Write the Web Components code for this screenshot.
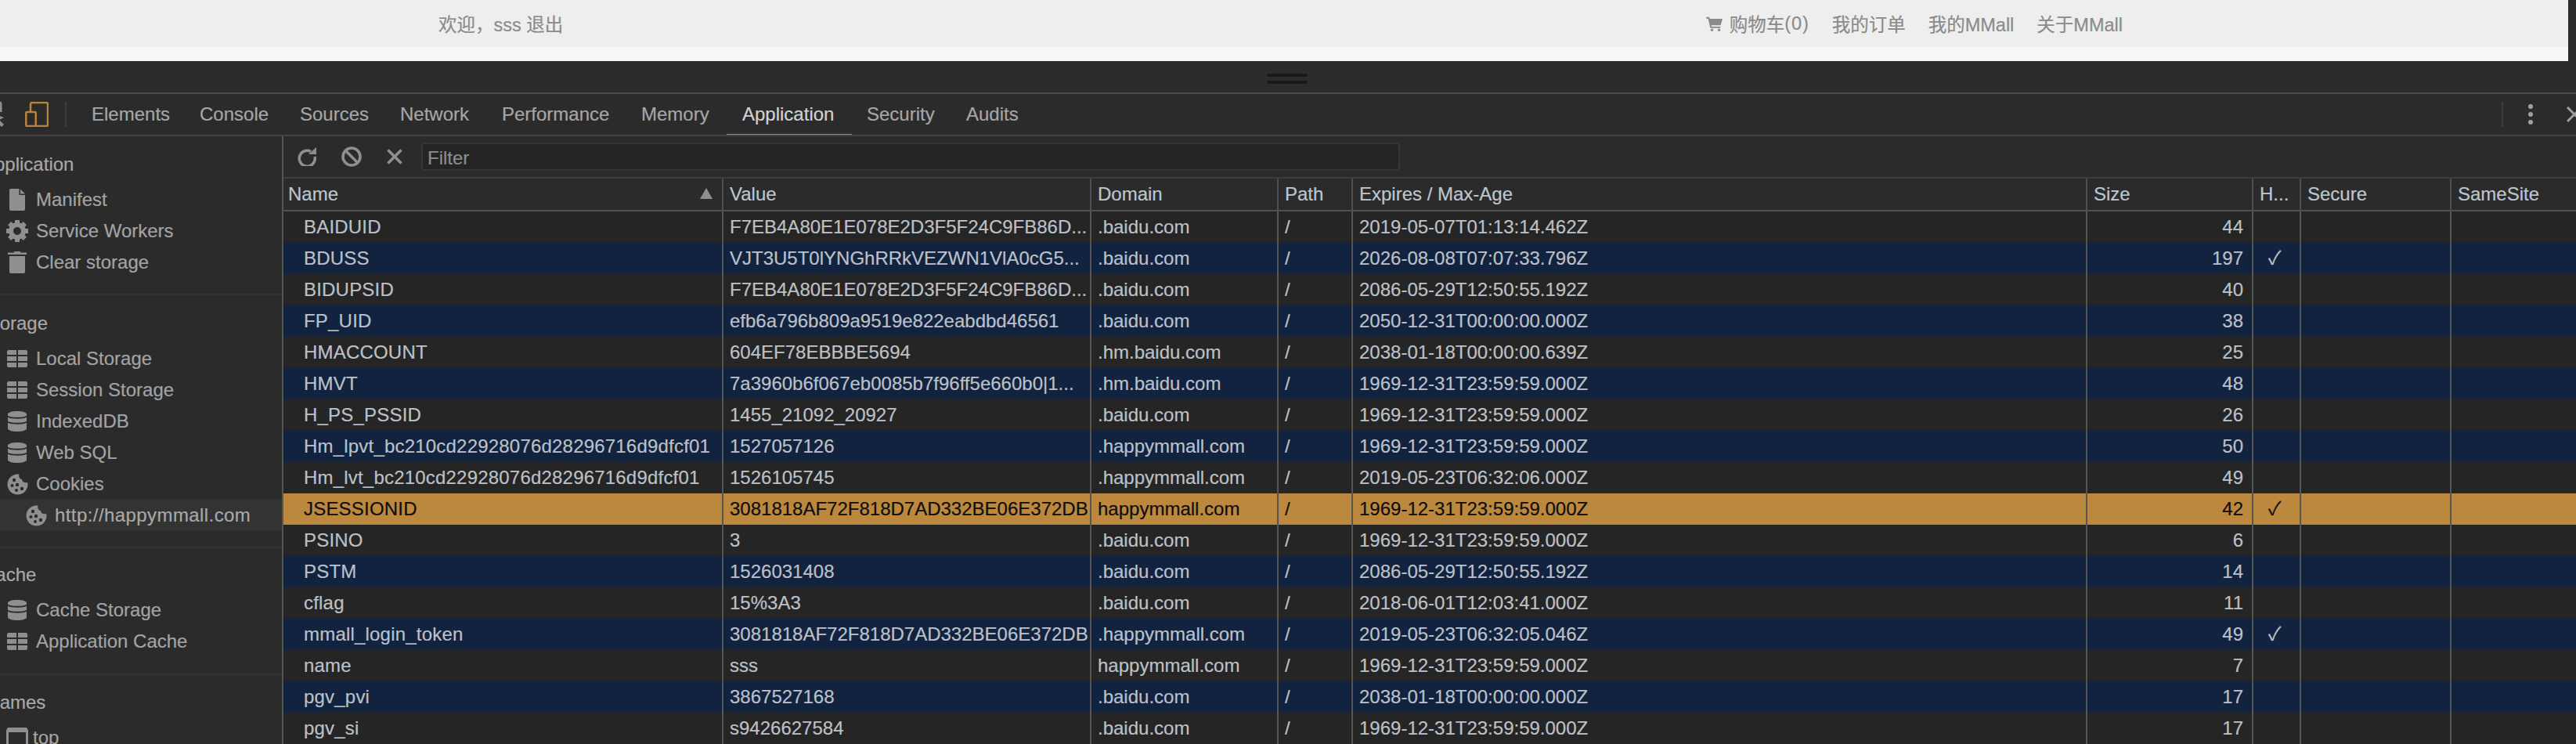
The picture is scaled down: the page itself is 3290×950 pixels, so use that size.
<!DOCTYPE html>
<html lang="zh">
<head>
<meta charset="utf-8">
<title>DevTools Application</title>
<style>
html,body{margin:0;padding:0;background:#2b2b2b;overflow:hidden}
body{width:3290px;height:950px;font-family:"Liberation Sans","Noto Sans CJK SC",sans-serif;font-size:24px;-webkit-text-stroke:.2px}
</style>
</head>
<body>
<dt-app>
  <mm-nav></mm-nav>
  <dt-resizer></dt-resizer>
  <dt-tabbar>
    <dt-tab w="138">Elements</dt-tab>
    <dt-tab w="128">Console</dt-tab>
    <dt-tab w="128">Sources</dt-tab>
    <dt-tab w="130">Network</dt-tab>
    <dt-tab w="178">Performance</dt-tab>
    <dt-tab w="129">Memory</dt-tab>
    <dt-tab w="159" active>Application</dt-tab>
    <dt-tab w="127">Security</dt-tab>
    <dt-tab w="107">Audits</dt-tab>
  </dt-tabbar>
  <dt-main>
    <dt-sidebar>
      <dt-section title-text="Application" pad-top="16" pad-bottom="20" first>
        <dt-item icon="file">Manifest</dt-item>
        <dt-item icon="gear">Service Workers</dt-item>
        <dt-item icon="trash">Clear storage</dt-item>
      </dt-section>
      <dt-section title-text="Storage" pad-top="16" pad-bottom="20">
        <dt-item icon="grid">Local Storage</dt-item>
        <dt-item icon="grid">Session Storage</dt-item>
        <dt-item icon="db">IndexedDB</dt-item>
        <dt-item icon="db">Web SQL</dt-item>
        <dt-item icon="cookie">Cookies</dt-item>
        <dt-item icon="cookie" child selected>http://happymmall.com</dt-item>
      </dt-section>
      <dt-section title-text="Cache" pad-top="14" pad-bottom="21">
        <dt-item icon="db">Cache Storage</dt-item>
        <dt-item icon="grid">Application Cache</dt-item>
      </dt-section>
      <dt-section title-text="Frames" pad-top="15" pad-bottom="0">
        <dt-item icon="frame" tight>top</dt-item>
      </dt-section>
    </dt-sidebar>
    <dt-panel>
      <dt-filterbar></dt-filterbar>
      <dt-cookie-table></dt-cookie-table>
    </dt-panel>
  </dt-main>
</dt-app>
<script>
const ICONS = {
  file:'<svg width="20" height="28" viewBox="0 0 20 28"><path fill="#8f8f8f" d="M2 0H12.5V8H20V26a2 2 0 0 1-2 2H2a2 2 0 0 1-2-2V2a2 2 0 0 1 2-2zM14 0.5L20 6.5H14z"/></svg>',
  gear:'<svg width="28" height="28" viewBox="0 0 28 28"><g fill="#8f8f8f">'+[0,45,90,135,180,225,270,315].map(a=>`<rect x="11" y="0" width="6" height="6" transform="rotate(${a} 14 14)"/>`).join('')+'</g><circle cx="14" cy="14" r="8" fill="none" stroke="#8f8f8f" stroke-width="6"/></svg>',
  trash:'<svg width="24" height="28" viewBox="0 0 24 28"><path fill="#8f8f8f" d="M8 0h8v1.500h8V4H0V1.500h8zM2 6H22V26a2 2 0 0 1-2 2H4a2 2 0 0 1-2-2z"/></svg>',
  grid:'<svg width="26" height="22" viewBox="0 0 26 22"><g fill="#8f8f8f"><path d="M2 0h10v6H0V2a2 2 0 0 1 2-2z"/><path d="M14 0h10a2 2 0 0 1 2 2v4H14z"/><rect x="0" y="8" width="12" height="6"/><rect x="14" y="8" width="12" height="6"/><path d="M0 16h12v6H2a2 2 0 0 1-2-2z"/><path d="M14 16h12v4a2 2 0 0 1-2 2H14z"/></g></svg>',
  db:'<svg width="24" height="26" viewBox="0 0 24 26"><path fill="#8f8f8f" d="M0 4C0 1.500 5.500 0 12 0s12 1.500 12 4V22c0 2.500-5.500 4-12 4S0 24.500 0 22z"/><path fill="none" stroke="#2b2b2b" stroke-width="2" d="M0 6.500C2 9.500 22 9.500 24 6.500M0 13.500C2 16.500 22 16.500 24 13.500"/></svg>',
  cookie:'<svg width="27" height="27" viewBox="0 0 27 27"><path fill="#8f8f8f" fill-rule="evenodd" d="M13.500 0.500C14.500 0.500 15 0.600 15.500 1C14.500 4 16.500 7 19 7C19 10 22 12 26 11C26.300 12 26.500 12.800 26.500 13.500A13 13 0 1 1 13.500 0.500z"/><g fill="#2b2b2b"><circle cx="9" cy="8" r="2.200"/><circle cx="6.500" cy="15" r="2"/><circle cx="13" cy="14" r="2.200"/><circle cx="12" cy="21" r="2"/><circle cx="19" cy="19" r="2.200"/></g></svg>',
  frame:'<svg width="28" height="28" viewBox="0 0 28 28"><rect x="1.500" y="2.500" width="25" height="24" rx="3" fill="none" stroke="#8f8f8f" stroke-width="3"/><rect x="1" y="1" width="26" height="6" rx="2" fill="#8f8f8f"/></svg>'
};

function shadow(el, html){
  const r = el.attachShadow({mode:'open'});
  r.innerHTML = html;
  return r;
}

class DtApp extends HTMLElement{
  constructor(){super();shadow(this,`<style>:host{display:flex;flex-direction:column;width:3290px;height:950px;overflow:hidden;background:#2b2b2b}</style><slot></slot>`);}
}
class MmNav extends HTMLElement{
  constructor(){super();shadow(this,`<style>
    :host{display:block;width:3280px;height:78px;background:#f6f6f6;flex:none;color:#8b8b8b;font-family:"Liberation Sans","Noto Sans CJK SC",sans-serif;font-size:23.5px}
    .bar{height:60px;background:#eeeeee;display:flex;align-items:center;justify-content:space-between;padding:0 569px 0 560px;box-sizing:border-box}
    .links{display:flex;gap:29px;align-items:center}
    .link{display:flex;align-items:center;white-space:nowrap}
    svg{margin-right:9px}
    .w{white-space:nowrap}
    .z{letter-spacing:.9px}
  </style>
  <div class="bar">
    <div class="w">欢迎，sss 退出</div>
    <div class="links">
      <div class="link"><svg width="21" height="19" viewBox="0 0 24 22"><path fill="#8b8b8b" d="M0 1h4.500l.8 2.500H24l-2.500 9.500H7.500l.4 2H21v2.200H6L2.800 3.200H0z"/><circle cx="8.500" cy="20" r="2" fill="#8b8b8b"/><circle cx="19" cy="20" r="2" fill="#8b8b8b"/></svg>购物车<span class="z">(0)</span></div>
      <div class="link">我的订单</div>
      <div class="link">我的MMall</div>
      <div class="link">关于MMall</div>
    </div>
  </div>`);}
}
class DtResizer extends HTMLElement{
  constructor(){super();shadow(this,`<style>
    :host{display:flex;flex:none;height:40px;border-bottom:2px solid #4a4a4a;justify-content:center;box-sizing:content-box;background:#2b2b2b}
    .h{width:52px;display:flex;flex-direction:column;gap:5px;margin:16px 0 0 -3px}
    .h i{display:block;height:4px;border-radius:2px;background:#191919}
  </style><div class="h"><i></i><i></i></div>`);}
}
class DtTabbar extends HTMLElement{
  constructor(){super();shadow(this,`<style>
    :host{display:flex;flex:none;height:52px;border-bottom:2px solid #434343;align-items:stretch;background:#2b2b2b;overflow:hidden;position:relative}
    .start{display:flex;align-items:center;width:97px;flex:none;position:relative}
    .ins{margin-left:-26px;flex:none}
    .dev{margin-left:26px;flex:none}
    .sep{width:2px;height:32px;background:#3d3d3d;margin-left:21px;flex:none}
    .tabs{display:flex;flex:1}
    .end{display:flex;align-items:center;flex:none;width:95px}
    .end .sep{margin:0 31px 0 0}
    .end svg{flex:none}
    .x{margin-left:42px}
  </style>
  <div class="start">
    <svg class="ins" width="32" height="34" viewBox="0 0 32 34"><path fill="none" stroke="#8f8f8f" stroke-width="3" d="M3 18V4a2 2 0 0 1 2-2H25a2 2 0 0 1 2 2V14"/><path fill="#8f8f8f" d="M15 15L31 21L25 24L31 30L28 33L22 27L19 33z"/></svg>
    <svg class="dev" width="30" height="32" viewBox="0 0 30 32"><path fill="none" stroke="#b8863b" stroke-width="2.500" d="M7 12V3a2 2 0 0 1 2-2H27a2 2 0 0 1 2 2V29a2 2 0 0 1-2 2H14"/><rect x="1.250" y="13" width="12.500" height="18" rx="1.500" fill="none" stroke="#b8863b" stroke-width="2.500"/></svg>
    <div class="sep"></div>
  </div>
  <div class="tabs"><slot></slot></div>
  <div class="end">
    <div class="sep"></div>
    <svg width="8" height="26" viewBox="0 0 8 26"><g fill="#a0a0a0"><circle cx="4" cy="3" r="3"/><circle cx="4" cy="13" r="3"/><circle cx="4" cy="23" r="3"/></g></svg>
    <svg class="x" width="20" height="20" viewBox="0 0 20 20"><path fill="none" stroke="#a0a0a0" stroke-width="3" d="M1 1L19 19M19 1L1 19"/></svg>
  </div>`);}
}
class DtTab extends HTMLElement{
  constructor(){super();const w=this.getAttribute('w');const a=this.hasAttribute('active');
    shadow(this,`<style>
    :host{display:flex;flex:none;width:${w}px;box-sizing:border-box;padding-left:20px;align-items:center;color:${a?'#d2d2d2':'#a6a6a6'};white-space:nowrap;position:relative;font-size:24px}
    .u{position:absolute;left:0;width:160px;bottom:-2px;height:3px;background:#b8863b}
    </style><slot></slot>${a?'<div class="u"></div>':''}`);}
}
class DtMain extends HTMLElement{
  constructor(){super();shadow(this,`<style>:host{display:flex;flex:1;min-height:0;overflow:hidden}</style><slot></slot>`);}
}
class DtSidebar extends HTMLElement{
  constructor(){super();shadow(this,`<style>:host{display:block;flex:none;width:360px;box-sizing:content-box;border-right:2px solid #555;background:#2b2b2b;overflow:hidden}</style><slot></slot>`);}
}
class DtSection extends HTMLElement{
  constructor(){super();const t=this.getAttribute('title-text'),pt=this.getAttribute('pad-top'),pb=this.getAttribute('pad-bottom'),f=this.hasAttribute('first');
    shadow(this,`<style>
    :host{display:block;padding:${pt}px 0 ${pb}px;${f?'':'border-top:2px solid #333;'}}
    .h{height:40px;line-height:40px;margin:0 0 5px -23px;color:#a8a8a8;white-space:nowrap;font-size:24px}
    </style><div class="h">${t}</div><slot></slot>`);}
}
class DtItem extends HTMLElement{
  constructor(){super();const ic=this.getAttribute('icon'),child=this.hasAttribute('child'),sel=this.hasAttribute('selected'),tight=this.hasAttribute('tight');
    shadow(this,`<style>
    :host{display:flex;height:40px;align-items:center;box-sizing:border-box;padding-left:${child?32:8}px;color:${sel?'#a8a8a8':'#a3a3a3'};white-space:nowrap;background:${sel?'#333333':'transparent'};font-size:24px;${child?'letter-spacing:.42px;':''}}
    .i{width:28px;height:40px;flex:none;display:flex;align-items:center;justify-content:center;margin-right:${tight?6:10}px}
    </style><span class="i">${ICONS[ic]}</span><slot></slot>`);}
}
class DtPanel extends HTMLElement{
  constructor(){super();shadow(this,`<style>:host{display:flex;flex-direction:column;flex:1;min-width:0}</style><slot></slot>`);}
}
class DtFilterbar extends HTMLElement{
  constructor(){super();shadow(this,`<style>
    :host{display:flex;flex:none;height:52px;align-items:center;border-bottom:2px solid #3e3e3e;padding-left:18px;background:#2b2b2b}
    svg{flex:none}
    .f{margin-left:24px;width:1250px;height:36px;box-sizing:border-box;background:#242424;border:2px solid #363636;border-radius:4px;color:#8c8c8c;font-size:24px;line-height:35px;padding-left:6px;flex:none}
  </style>
  <svg width="24" height="24" viewBox="0 0 24 24" style="margin-right:32px"><path fill="none" stroke="#8f8f8f" stroke-width="3.600" d="M17 5.500A10 10 0 1 0 22 12"/><path fill="#8f8f8f" d="M14 9L24 9V0z"/></svg>
  <svg width="26" height="26" viewBox="0 0 26 26" style="margin-right:32px"><circle cx="13" cy="13" r="11" fill="none" stroke="#8f8f8f" stroke-width="3.600"/><path stroke="#8f8f8f" stroke-width="3.600" d="M5.500 5.500L20.500 20.500"/></svg>
  <svg width="20" height="20" viewBox="0 0 20 20"><path fill="none" stroke="#8f8f8f" stroke-width="3.600" d="M1.500 1.500L18.500 18.500M18.500 1.500L1.500 18.500"/></svg>
  <div class="f">Filter</div>`);}
}
const COLS='560px 470px 239px 95px 938px 212px 61px 192px 161px';
class DtCookieTable extends HTMLElement{
  constructor(){super();
    const D='1969-12-31T23:59:59.000Z', F='F7EB4A80E1E078E2D3F5F24C9FB86D...', J='3081818AF72F818D7AD332BE06E372DB';
    const B='.baidu.com',H='.hm.baidu.com',P='.happymmall.com',Q='happymmall.com';
    const rows=[
      ['BAIDUID',F,B,'2019-05-07T01:13:14.462Z','44'],
      ['BDUSS','VJT3U5T0lYNGhRRkVEZWN1VlA0cG5...',B,'2026-08-08T07:07:33.796Z','197',1],
      ['BIDUPSID',F,B,'2086-05-29T12:50:55.192Z','40'],
      ['FP_UID','efb6a796b809a9519e822eabdbd46561',B,'2050-12-31T00:00:00.000Z','38'],
      ['HMACCOUNT','604EF78EBBBE5694',H,'2038-01-18T00:00:00.639Z','25'],
      ['HMVT','7a3960b6f067eb0085b7f96ff5e660b0|1...',H,D,'48'],
      ['H_PS_PSSID','1455_21092_20927',B,D,'26'],
      ['Hm_lpvt_bc210cd22928076d28296716d9dfcf01','1527057126',P,D,'50'],
      ['Hm_lvt_bc210cd22928076d28296716d9dfcf01','1526105745',P,'2019-05-23T06:32:06.000Z','49'],
      ['JSESSIONID',J,Q,D,'42',1],
      ['PSINO','3',B,D,'6'],
      ['PSTM','1526031408',B,'2086-05-29T12:50:55.192Z','14'],
      ['cflag','15%3A3',B,'2018-06-01T12:03:41.000Z','11'],
      ['mmall_login_token',J,P,'2019-05-23T06:32:05.046Z','49',1],
      ['name','sss',Q,D,'7'],
      ['pgv_pvi','3867527168',B,'2038-01-18T00:00:00.000Z','17'],
      ['pgv_si','s9426627584',B,D,'17']
    ];
    const r=shadow(this,`<style>
      :host{display:block;flex:1;min-height:0;overflow:hidden;font-size:24px;--cols:${COLS}}
      .head{display:grid;grid-template-columns:var(--cols);height:40px;border-bottom:2px solid #505050;background:#2b2b2b;color:#bcc6d0;margin-bottom:0}
      .head div{position:relative;box-sizing:border-box;border-left:2px solid #505050;padding-left:8px;line-height:40px;white-space:nowrap;overflow:hidden}
      .head div:first-child{border-left:0;padding-left:6px;overflow:visible}
      .tri{position:absolute;left:532px;top:12px;width:0;height:0;border:8px solid transparent;border-top:0;border-bottom:14px solid #8f8f8f}
      </style>
      <div class="head">
        <div>Name<span class="tri"></span></div><div>Value</div><div>Domain</div><div>Path</div><div>Expires / Max-Age</div><div>Size</div><div>H...</div><div>Secure</div><div>SameSite</div>
      </div><div id="rows"></div>`);
    const host=r.getElementById('rows');
    rows.forEach((d,i)=>{
      const e=document.createElement('dt-row');
      e.data=d; e.kind = i===9?'sel':(i%2?'alt':'odd');
      host.appendChild(e);
    });
  }
}
class DtRow extends HTMLElement{
  connectedCallback(){
    if(this.shadowRoot) return;
    const d=this.data,k=this.kind;
    const bg={sel:'#bb883e',alt:'#122340',odd:'#252525'}[k];
    const c=k==='sel'?'#0e0e0e':'#bcc0c7';
    const cell=(t,cl='')=>`<div class="${cl}">${t}</div>`;
    shadow(this,`<style>
      :host{display:grid;grid-template-columns:var(--cols);height:40px;background:${bg};color:${c}}
      div{box-sizing:border-box;border-left:2px solid #555;padding:0 8px;line-height:40px;white-space:nowrap;overflow:hidden}
      .n{border-left:0;padding-left:26px;letter-spacing:.2px}
      .r{text-align:right;padding-right:11px}
      .c{text-align:left;padding-left:19px}
      </style>${cell(d[0],'n')}${cell(d[1])}${cell(d[2])}${cell('/')}${cell(d[3])}${cell(d[4],'r')}${cell(d[5]?'✓':'','c')}${cell('')}${cell('')}`);
  }
}
[['dt-app',DtApp],['mm-nav',MmNav],['dt-resizer',DtResizer],['dt-tabbar',DtTabbar],['dt-tab',DtTab],['dt-main',DtMain],['dt-sidebar',DtSidebar],['dt-section',DtSection],['dt-item',DtItem],['dt-panel',DtPanel],['dt-filterbar',DtFilterbar],['dt-row',DtRow],['dt-cookie-table',DtCookieTable]].forEach(([n,c])=>customElements.define(n,c));
</script>
</body>
</html>
